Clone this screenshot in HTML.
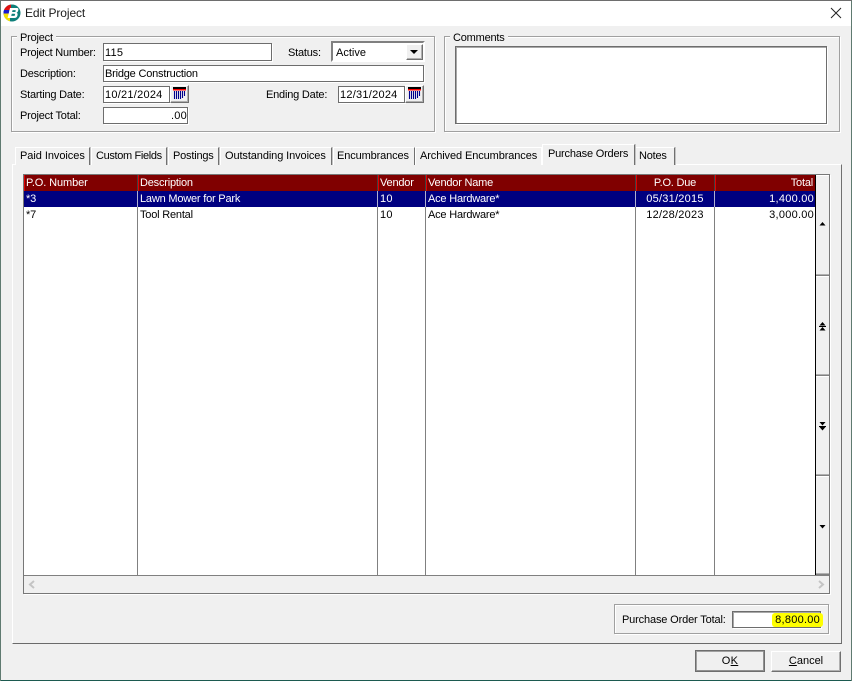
<!DOCTYPE html>
<html><head><meta charset="utf-8"><style>
html,body{margin:0;padding:0;background:#f0f0f0}
#w{position:relative;width:852px;height:681px;overflow:hidden;background:#f0f0f0;font-family:"Liberation Sans",sans-serif;font-size:11px;letter-spacing:-.2px;color:#000}
#w div,#w span{position:absolute;box-sizing:border-box}
.t{white-space:nowrap;line-height:14px;height:14px}
.n{letter-spacing:.25px}
.r{text-align:right}
.c{text-align:center}
.g{border:1px solid #a0a0a0;box-shadow:inset 1px 1px 0 #fff,1px 1px 0 #fff}
.i{background:#fff;border:1px solid #6d6d6d;box-shadow:1px 1px 0 #fff}
.tab{background:#f0f0f0;border-top:1px solid #fff;border-left:1px solid #fff;border-right:1px solid #707070;box-shadow:1px 0 0 #c4c4c4;height:18px;top:147px}
.sep{width:1px;background:#808080;top:207px;height:368px}
.hs{width:1px;background:#e00000;top:175px;height:16px}
.hd{width:1px;background:#404040;top:175px;height:16px}
.sb{left:816px;width:13px;background:#f0f0f0;border-top:1px solid #fff;border-bottom:1px solid #808080;box-shadow:inset 0 -1px 0 #b0b0b0}
.btn{background:#f0f0f0;border-top:1px solid #fff;border-left:1px solid #fff;border-right:1px solid #707070;border-bottom:1px solid #707070;box-shadow:inset -1px -1px 0 #b0b0b0}
</style></head><body><div id="w">
<!-- window frame -->
<div style="left:0;top:1px;width:852px;height:25px;background:#fff"></div>
<div style="left:0;top:0;width:852px;height:1px;background:#6e6e6e"></div>
<div style="left:0;top:680px;width:852px;height:1px;background:#1c5a50"></div>
<div style="left:0;top:1px;width:1px;height:680px;background:#5f7a70"></div>
<div style="left:851px;top:1px;width:1px;height:680px;background:#5f7a70"></div>
<svg style="position:absolute;left:3px;top:4px" width="18" height="18" viewBox="0 0 18 18">
<defs><clipPath id="ci"><circle cx="9" cy="9" r="8.5"/></clipPath></defs>
<circle cx="9" cy="9" r="8.5" fill="#0f7f7a"/>
<g clip-path="url(#ci)">
<rect x="0" y="0" width="8" height="6" fill="#e01010"/>
<rect x="0" y="6" width="6" height="3.5" fill="#1818d0"/>
<rect x="0" y="9.5" width="7" height="8" fill="#f4e000"/>
</g>
<path d="M7 4H14Q15.8 4 15.3 6.2Q15 8 13.6 8.6Q14.9 9.2 14.5 11.2Q14 14 11.2 14H4.6ZM9.6 6.1L9.1 8H11.7Q12.7 8 12.8 7Q12.9 6.1 12 6.1ZM8.8 9.8L8.2 11.9H11Q12 11.9 12.1 10.8Q12.2 9.8 11.3 9.8Z" fill="#fff" fill-rule="evenodd"/>
</svg>
<span class="t" style="left:25px;top:6px;font-size:12px;letter-spacing:-.1px;color:#1a1a1a">Edit Project</span>
<svg style="position:absolute;left:830px;top:7px" width="12" height="12"><path d="M1 1L11 11M11 1L1 11" stroke="#222" stroke-width="1" fill="none"/></svg>

<!-- project group -->
<div class="g" style="left:11px;top:36px;width:424px;height:96px"></div>
<span class="t" style="left:17px;top:31px;background:#f0f0f0;padding:0 3px">Project</span>
<span class="t" style="left:20px;top:46px;letter-spacing:-.25px">Project Number:</span>
<div class="i" style="left:103px;top:43px;width:169px;height:18px"></div>
<span class="t n" style="left:105px;top:46px">115</span>
<span class="t" style="left:288px;top:46px">Status:</span>
<div style="left:331px;top:41px;width:94px;height:21px;background:#fff;border:2px solid #808080;border-right-color:#fff;border-bottom-color:#fff"></div>
<span class="t" style="left:336px;top:46px;letter-spacing:0">Active</span>
<div class="btn" style="left:406px;top:44px;width:17px;height:16px"></div>
<svg style="position:absolute;left:410px;top:50px" width="9" height="5"><path d="M0 0H8L4 4Z" fill="#000"/></svg>

<span class="t" style="left:20px;top:67px">Description:</span>
<div class="i" style="left:103px;top:65px;width:321px;height:17px"></div>
<span class="t" style="left:105px;top:67px">Bridge Construction</span>

<span class="t" style="left:20px;top:88px">Starting Date:</span>
<div class="i" style="left:103px;top:86px;width:67px;height:17px"></div>
<span class="t n" style="left:105px;top:88px">10/21/2024</span>
<div class="btn" style="left:170px;top:85px;width:19px;height:18px"></div>
<svg style="position:absolute;left:173px;top:87px" width="13" height="13"><rect x="0" y="0" width="13" height="2" fill="#000"/><rect x="0" y="2" width="13" height="1.5" fill="#f00"/><path d="M1.5 4V12M3.5 4V12M5.5 4V12M7.5 4V12M9.5 4V11M11.5 4V9" stroke="#00008b" stroke-width="1.1"/></svg>

<span class="t" style="left:266px;top:88px">Ending Date:</span>
<div class="i" style="left:338px;top:86px;width:67px;height:17px"></div>
<span class="t n" style="left:340px;top:88px">12/31/2024</span>
<div class="btn" style="left:405px;top:85px;width:19px;height:18px"></div>
<svg style="position:absolute;left:408px;top:87px" width="13" height="13"><rect x="0" y="0" width="13" height="2" fill="#000"/><rect x="0" y="2" width="13" height="1.5" fill="#f00"/><path d="M1.5 4V12M3.5 4V12M5.5 4V12M7.5 4V12M9.5 4V11M11.5 4V9" stroke="#00008b" stroke-width="1.1"/></svg>

<span class="t" style="left:20px;top:109px">Project Total:</span>
<div class="i" style="left:103px;top:107px;width:85px;height:17px"></div>
<span class="t r n" style="left:103px;top:109px;width:84px">.00</span>

<!-- comments group -->
<div class="g" style="left:444px;top:36px;width:396px;height:96px"></div>
<span class="t" style="left:450px;top:31px;background:#f0f0f0;padding:0 3px">Comments</span>
<div class="i" style="left:455px;top:46px;width:372px;height:78px;box-shadow:1px 1px 0 #fff,inset 1px 1px 0 #a8a8a8"></div>

<!-- panel -->
<div style="left:12px;top:164px;width:830px;height:480px;background:#f0f0f0;border-top:1px solid #fff;border-left:1px solid #fff;border-right:1px solid #707070;border-bottom:1px solid #6a6a6a"></div>
<div class="tab" style="left:15px;width:75px"></div><span class="t" style="left:20px;top:149px;letter-spacing:-.05px">Paid Invoices</span>
<div class="tab" style="left:91px;width:76px"></div><span class="t" style="left:96px;top:149px;letter-spacing:-.35px">Custom Fields</span>
<div class="tab" style="left:168px;width:51px"></div><span class="t" style="left:173px;top:149px">Postings</span>
<div class="tab" style="left:220px;width:112px"></div><span class="t" style="left:225px;top:149px;letter-spacing:-.1px">Outstanding Invoices</span>
<div class="tab" style="left:333px;width:82px"></div><span class="t" style="left:337px;top:149px;letter-spacing:-.12px">Encumbrances</span>
<div class="tab" style="left:415px;width:127px;border-right:1px solid #fff;box-shadow:none"></div><span class="t" style="left:420px;top:149px;letter-spacing:-.1px">Archived Encumbrances</span>
<div class="tab" style="left:542px;top:144px;width:93px;height:21px;z-index:1"></div><span class="t" style="left:548px;top:147px;z-index:2">Purchase Orders</span>
<div class="tab" style="left:635px;width:40px"></div><span class="t" style="left:639px;top:149px">Notes</span>

<!-- grid -->
<div style="left:23px;top:174px;width:807px;height:420px;background:#f0f0f0;border:1px solid #777;box-shadow:1px 1px 0 #fff"></div>
<div style="left:24px;top:174px;width:805px;height:1px;background:#777"></div>
<div style="left:24px;top:175px;width:791px;height:400px;background:#fff"></div>
<div style="left:24px;top:175px;width:791px;height:16px;background:#800000"></div>
<div style="left:24px;top:191px;width:791px;height:16px;background:#000080"></div>
<div style="left:815px;top:175px;width:1px;height:400px;background:#000"></div>
<div style="left:24px;top:575px;width:805px;height:1px;background:#808080"></div>

<div class="sep" style="left:137px"></div><div class="sep" style="left:377px"></div><div class="sep" style="left:425px"></div><div class="sep" style="left:635px"></div><div class="sep" style="left:714px"></div>
<div style="left:137px;top:191px;width:1px;height:16px;background:#b0b0d0"></div><div style="left:377px;top:191px;width:1px;height:16px;background:#b0b0d0"></div><div style="left:425px;top:191px;width:1px;height:16px;background:#b0b0d0"></div><div style="left:635px;top:191px;width:1px;height:16px;background:#b0b0d0"></div><div style="left:714px;top:191px;width:1px;height:16px;background:#b0b0d0"></div>
<div class="hd" style="left:137px"></div><div class="hs" style="left:138px"></div>
<div class="hd" style="left:377px"></div><div class="hs" style="left:378px"></div>
<div class="hd" style="left:425px"></div><div class="hs" style="left:426px"></div>
<div class="hd" style="left:635px"></div><div class="hs" style="left:636px"></div>
<div class="hd" style="left:714px"></div><div class="hs" style="left:715px"></div>
<div class="hs" style="left:24px"></div>

<span class="t" style="left:26px;top:176px;color:#fff;letter-spacing:-.1px">P.O. Number</span>
<span class="t" style="left:140px;top:176px;color:#fff">Description</span>
<span class="t" style="left:380px;top:176px;color:#fff">Vendor</span>
<span class="t" style="left:428px;top:176px;color:#fff">Vendor Name</span>
<span class="t c" style="left:636px;top:176px;width:78px;color:#fff">P.O. Due</span>
<span class="t r" style="left:716px;top:176px;width:97px;color:#fff">Total</span>

<span class="t" style="left:26px;top:192px;color:#fff">*3</span>
<span class="t" style="left:140px;top:192px;color:#fff">Lawn Mower for Park</span>
<span class="t n" style="left:380px;top:192px;color:#fff">10</span>
<span class="t" style="left:428px;top:192px;color:#fff">Ace Hardware*</span>
<span class="t c n" style="left:636px;top:192px;width:78px;color:#fff">05/31/2015</span>
<span class="t r n" style="left:716px;top:192px;width:98px;color:#fff">1,400.00</span>

<span class="t" style="left:26px;top:208px">*7</span>
<span class="t" style="left:140px;top:208px">Tool Rental</span>
<span class="t n" style="left:380px;top:208px">10</span>
<span class="t" style="left:428px;top:208px">Ace Hardware*</span>
<span class="t c n" style="left:636px;top:208px;width:78px">12/28/2023</span>
<span class="t r n" style="left:716px;top:208px;width:98px">3,000.00</span>

<!-- vertical scroll buttons -->
<div class="sb" style="top:175px;height:101px"></div>
<div class="sb" style="top:276px;height:100px"></div>
<div class="sb" style="top:376px;height:100px"></div>
<div class="sb" style="top:476px;height:99px"></div>
<svg style="position:absolute;left:819px;top:222px" width="7" height="4"><path d="M3.5 0L6.5 3.5H.5Z" fill="#000"/></svg>
<svg style="position:absolute;left:819px;top:322px" width="7" height="9"><path d="M3.5 0L6.5 3.5H.5ZM0 4H7V5H0ZM3.5 5L6.5 8.5H.5Z" fill="#000"/></svg>
<svg style="position:absolute;left:819px;top:422px" width="7" height="9"><path d="M.5 0H6.5L3.5 3.5ZM0 4H7V5H0ZM.5 5H6.5L3.5 8.5Z" fill="#000"/></svg>
<svg style="position:absolute;left:819px;top:525px" width="7" height="4"><path d="M.5 0H6.5L3.5 3.5Z" fill="#000"/></svg>
<!-- h scroll arrows -->
<svg style="position:absolute;left:28px;top:580px" width="8" height="9"><path d="M6 1L2 4.5L6 8" stroke="#c4c4c4" stroke-width="2" fill="none"/></svg>
<svg style="position:absolute;left:817px;top:580px" width="8" height="9"><path d="M2 1L6 4.5L2 8" stroke="#c4c4c4" stroke-width="2" fill="none"/></svg>

<!-- total -->
<div class="g" style="left:614px;top:604px;width:215px;height:30px"></div>
<span class="t" style="left:622px;top:613px;letter-spacing:-.15px">Purchase Order Total:</span>
<div class="i" style="left:732px;top:611px;width:89px;height:17px;box-shadow:1px 1px 0 #fff,inset 1px 1px 0 #a8a8a8"></div>
<div style="left:772px;top:613px;width:51px;height:14px;background:#ffff00;border-radius:3px"></div>
<span class="t r n" style="left:733px;top:613px;width:87px">8,800.00</span>

<!-- buttons -->
<div style="left:695px;top:650px;width:70px;height:22px;background:#f0f0f0;border:1px solid #6e6e6e;box-shadow:inset -1px -1px 0 #909090,inset 1px 1px 0 #a0a0a0"></div>
<span class="t c" style="left:695px;top:654px;width:70px;letter-spacing:.3px">O<u>K</u></span>
<div class="btn" style="left:771px;top:651px;width:70px;height:21px"></div>
<span class="t c" style="left:771px;top:654px;width:70px;letter-spacing:0"><u>C</u>ancel</span>
</div></body></html>
